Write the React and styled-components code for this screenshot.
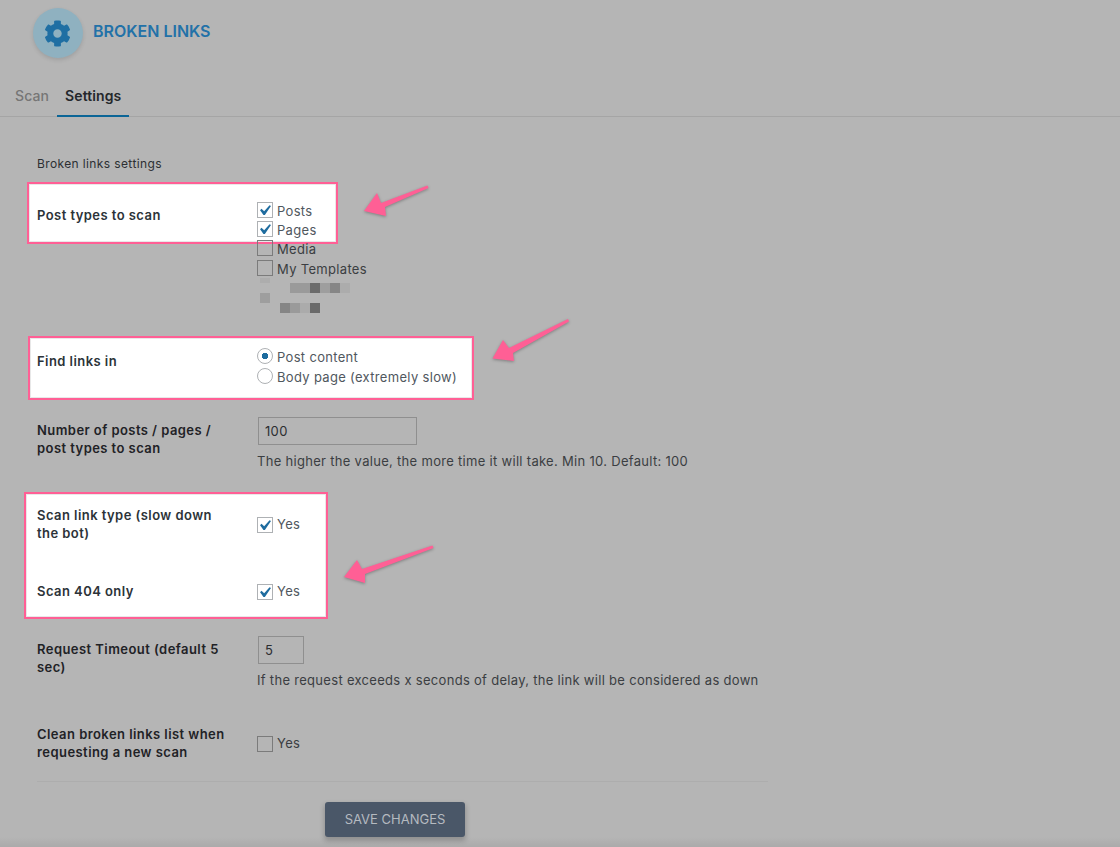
import React from "react";
import styled, { createGlobalStyle } from "styled-components";
import { FaCog } from "react-icons/fa";

const GlobalStyle = createGlobalStyle`
  html, body {
    margin: 0;
    padding: 0;
    background: #b5b5b5;
  }
  * {
    box-sizing: border-box;
  }
`;

const POST_TYPES = [
  { label: "Posts", checked: true, lit: true },
  { label: "Pages", checked: true, lit: true },
  { label: "Media" },
  { label: "My Templates" },
];

const MOSAIC = [
  [3, 22, 10, 5, "#adadad"],
  [33, 27, 20, 10, "#9a9a9a"],
  [53, 27, 10, 10, "#6b6b6b"],
  [63, 27, 10, 10, "#9e9e9e"],
  [73, 27, 10, 10, "#868686"],
  [83, 27, 10, 10, "#acacac"],
  [3, 37, 10, 10, "#9e9e9e"],
  [23, 47, 10, 10, "#858585"],
  [33, 47, 10, 10, "#9a9a9a"],
  [43, 47, 10, 10, "#ababab"],
  [53, 47, 10, 10, "#6a6a6a"],
];

function Check({ checked, lit, shift }) {
  return (
    <Box $lit={lit} $shift={shift}>
      {checked && (
        <CheckMark viewBox="0 0 20 20">
          <path d="M14.83 4.89l1.34.94-5.81 8.38H9.02L5.78 9.67l1.34-1.25 2.57 2.4z" />
        </CheckMark>
      )}
    </Box>
  );
}

function Arrow({ left, top, width, height, points }) {
  return (
    <ArrowSvg $left={left} $top={top} width={width} height={height}>
      <polygon points={points} />
    </ArrowSvg>
  );
}

export default function App() {
  return (
    <Page>
      <GlobalStyle />
      <Header>
        <IconCircle>
          <FaCog size={27} />
        </IconCircle>
        <Title>BROKEN LINKS</Title>
      </Header>
      <Tabs>
        <Tab>Scan</Tab>
        <Tab $active>Settings</Tab>
      </Tabs>

      <Form>
        <SectionTitle>Broken links settings</SectionTitle>

        <Row $top={28}>
          <Label $lit $pad={6}>Post types to scan</Label>
          <Options>
            {POST_TYPES.map((type) => (
              <Option key={type.label} $lit={type.lit} $low>
                <Check checked={type.checked} lit={type.lit} shift={-2} />
                {type.label}
              </Option>
            ))}
            <svg width="100" height="38" viewBox="0 22 100 38">
              {MOSAIC.map(([x, y, w, h, fill]) => (
                <rect key={`${x}-${y}`} x={x} y={y} width={w} height={h} fill={fill} />
              ))}
            </svg>
          </Options>
        </Row>

        <Row $top={31}>
          <Label $lit $pad={5}>Find links in</Label>
          <Options>
            <Option $lit $low>
              <Radio $on />
              Post content
            </Option>
            <Option $lit $low>
              <Radio />
              Body page (extremely slow)
            </Option>
          </Options>
        </Row>

        <Row $top={32}>
          <Label $pad={4}>
            Number of posts / pages /<br />
            post types to scan
          </Label>
          <Field>
            <TextInput $width={159} defaultValue="100" />
            <Help>The higher the value, the more time it will take. Min 10. Default: 100</Help>
          </Field>
        </Row>

        <Row $top={36} $center>
          <Label $lit>
            Scan link type (slow down<br />
            the bot)
          </Label>
          <Option $lit>
            <Check checked lit shift={2} />
            Yes
          </Option>
        </Row>

        <Row $top={39} $center>
          <Label $lit>Scan 404 only</Label>
          <Option $lit>
            <Check checked lit shift={2} />
            Yes
          </Option>
        </Row>

        <Row $top={35}>
          <Label $pad={4}>
            Request Timeout (default 5<br />
            sec)
          </Label>
          <Field>
            <TextInput $width={46} defaultValue="5" />
            <Help>If the request exceeds x seconds of delay, the link will be considered as down</Help>
          </Field>
        </Row>

        <Row $top={36} $center>
          <Label>
            Clean broken links list when<br />
            requesting a new scan
          </Label>
          <Option>
            <Check shift={2} />
            Yes
          </Option>
        </Row>

        <Divider />
        <SaveButton>SAVE CHANGES</SaveButton>
      </Form>

      <Highlight $left={27} $top={182} $width={311} $height={62} />
      <Highlight $left={28} $top={336} $width={446} $height={64} />
      <Highlight $left={24} $top={492} $width={304} $height={127} />

      <Arrow left={360} top={182} width={72} height={38} points="4,29 17,11 21,21 67.5,3.5 68.5,6 25,25 26,34" />
      <Arrow left={490} top={316} width={84} height={50} points="2.5,42.5 13,24 19,32 78,3 79,5.5 23,37 24,45" />
      <Arrow left={342} top={542} width={96} height={44} points="2,35 15,18 20,27 90.5,3.5 91.5,6 23,32 23,41" />

      <FooterShade />
    </Page>
  );
}

const Page = styled.div`
  position: relative;
  isolation: isolate;
  width: 1120px;
  height: 847px;
  overflow: hidden;
  background: #b5b5b5;
  font-family: Inter, "Liberation Sans", sans-serif;
  font-size: 13px;
  color: #3b3e42;
`;

const Header = styled.header`
  display: flex;
  align-items: flex-start;
  gap: 10px;
  padding: 8px 0 0 33px;
  height: 77px;
`;

const IconCircle = styled.div`
  width: 50px;
  height: 50px;
  padding-right: 1px;
  border-radius: 50%;
  background: #8fb1c0;
  color: #1f6fa3;
  display: flex;
  align-items: center;
  justify-content: center;
  box-shadow: 0 2px 4px rgba(0, 0, 0, 0.12);
`;

const Title = styled.h1`
  margin: 13px 0 0;
  font-size: 16px;
  line-height: 20px;
  font-weight: 600;
  color: #2271a8;
`;

const Tabs = styled.nav`
  display: flex;
  height: 40px;
  padding-left: 7px;
  border-bottom: 1px solid #a5a5a5;
`;

const Tab = styled.div`
  padding: 11px 8px 0;
  height: 40px;
  line-height: 16px;
  font-size: 14px;
  letter-spacing: 0.1px;
  font-weight: ${({ $active }) => ($active ? 600 : 500)};
  color: ${({ $active }) => ($active ? "#24272b" : "#767676")};
  border-bottom: 2px solid ${({ $active }) => ($active ? "#0b6596" : "transparent")};
`;

const Form = styled.main`
  width: 731px;
  margin-left: 37px;
`;

const SectionTitle = styled.h2`
  margin: 39px 0 0;
  font-size: 12px;
  line-height: 16px;
  font-weight: 400;
  letter-spacing: 0.38px;
  color: #2c2f33;
`;

const Row = styled.div`
  display: grid;
  grid-template-columns: 220px 1fr;
  align-items: ${({ $center }) => ($center ? "center" : "start")};
  margin-top: ${({ $top }) => $top}px;
`;

const Label = styled.div`
  position: ${({ $lit }) => ($lit ? "relative" : "static")};
  z-index: 2;
  padding-top: ${({ $pad }) => $pad || 0}px;
  font-size: 13px;
  line-height: 18px;
  font-weight: 600;
  letter-spacing: 0.44px;
  color: ${({ $lit }) => ($lit ? "#2c3338" : "#1f2226")};
`;

const Options = styled.div`
  display: flex;
  flex-direction: column;
  align-items: flex-start;
`;

const Option = styled.label`
  position: ${({ $lit }) => ($lit ? "relative" : "static")};
  z-index: 2;
  display: flex;
  align-items: center;
  gap: 4px;
  height: 19.4px;
  padding-top: ${({ $low }) => ($low ? 2 : 0)}px;
  font-size: 13px;
  letter-spacing: 0.32px;
  color: ${({ $lit }) => ($lit ? "#50575e" : "#3b3e42")};
`;

const Box = styled.span`
  flex: none;
  width: 16px;
  height: 16px;
  margin-top: ${({ $shift }) => $shift || 0}px;
  background: ${({ $lit }) => ($lit ? "#fff" : "transparent")};
  border: 1px solid ${({ $lit }) => ($lit ? "#aeb1b4" : "#7b7b7b")};
`;

const CheckMark = styled.svg`
  display: block;
  width: 21px;
  height: 21px;
  margin: -3px 0 0 -4px;
  fill: #1e6c9f;
`;

const Radio = styled.span`
  flex: none;
  width: 16px;
  height: 16px;
  margin-top: -2px;
  border-radius: 50%;
  border: 1px solid #aeb1b4;
  background: ${({ $on }) =>
    $on ? "radial-gradient(circle, #1e6c9f 0 3px, #fff 3.5px)" : "#fff"};
`;

const Field = styled.div`
  display: flex;
  flex-direction: column;
  align-items: flex-start;
`;

const TextInput = styled.input`
  width: ${({ $width }) => $width}px;
  height: 28px;
  margin-left: 1px;
  padding: 0 6px;
  border: 1px solid #8f8f8f;
  border-radius: 0;
  background: #b5b5b5;
  font-family: inherit;
  font-size: 13px;
  letter-spacing: 0.32px;
  color: #2c2e31;
  outline: none;
`;

const Help = styled.p`
  margin: 7px 0 0;
  font-size: 13px;
  line-height: 18px;
  letter-spacing: 0.3px;
  color: #3b3e42;
`;

const Divider = styled.hr`
  margin: 20px 0 0;
  border: 0;
  border-top: 1px solid #adadad;
`;

const SaveButton = styled.button`
  display: block;
  width: 140px;
  height: 35px;
  margin: 20px 0 0 288px;
  border: 0;
  border-radius: 3px;
  background: #4a5768;
  color: #b5bac0;
  font-family: inherit;
  font-size: 13px;
  font-weight: 400;
  box-shadow: 0 3px 5px 1px rgba(0, 0, 0, 0.2);
`;

const Highlight = styled.div`
  position: absolute;
  z-index: 1;
  left: ${({ $left }) => $left}px;
  top: ${({ $top }) => $top}px;
  width: ${({ $width }) => $width}px;
  height: ${({ $height }) => $height}px;
  background: #fff;
  border: 2px solid #ff5f95;
  box-shadow: inset 0 0 0 1px #e8e8e8;
`;

const ArrowSvg = styled.svg`
  position: absolute;
  z-index: 3;
  left: ${({ $left }) => $left}px;
  top: ${({ $top }) => $top}px;
  fill: #ff5f95;
  filter: drop-shadow(0 1px 1.5px rgba(0, 0, 0, 0.3));
`;

const FooterShade = styled.div`
  position: absolute;
  z-index: 0;
  left: 0;
  right: 0;
  bottom: 0;
  height: 10px;
  background: linear-gradient(to bottom, rgba(0, 0, 0, 0), rgba(0, 0, 0, 0.06));
`;
